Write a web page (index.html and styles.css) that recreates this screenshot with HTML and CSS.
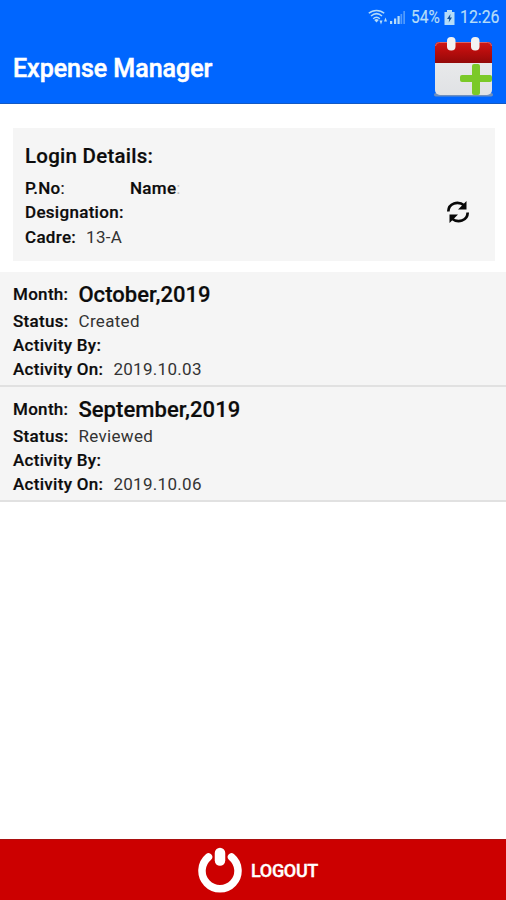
FILE: index.html
```html
<!DOCTYPE html>
<html lang="en">
<head>
<meta charset="utf-8">
<title>Expense Manager</title>
<link rel="stylesheet" href="styles.css">
</head>
<body>
<div class="screen">
  <header class="top">
    <div class="statusbar">
      <svg class="wifi" width="20" height="16" viewBox="0 0 20 16" fill="none" stroke="currentColor" stroke-width="1.5">
        <path d="M.8 4.300C5 .4 12 .4 16.200 4.300M3 7C6.500 4 10.500 4 14 7M5.200 9.700Q8.500 6.700 11.800 9.700"/>
        <path d="M6.200 11Q8.500 9 10.800 11L8.500 13.500zM11.500 11.500h3L13 15.500zM16 12.500l1.500-4 1.500 4z" fill="currentColor" stroke="none"/>
      </svg>
      <svg class="signal" width="16" height="13" viewBox="0 0 16 13" fill="currentColor">
        <path d="M0 10h2.200v3H0zM4 7.500h2.200V13H4zM7.500 5h2.200v8H7.500z"/><path opacity=".45" d="M10.500 3h1.700v10h-1.700zM13.300 0H15v13h-1.700z"/>
      </svg>
      <span class="percent">54%</span>
      <svg class="battery" width="11" height="15" viewBox="0 0 11 15">
        <path d="M3 0h5v2h2.500v13H.5V2H3z" fill="currentColor"/><path d="M6.500 4L3 9h2.200L4.700 12.500 8 7.500H6z" fill="#12529c"/>
      </svg>
      <span class="clock">12:26</span>
    </div>
    <div class="appbar">
      <h1>Expense Manager</h1>
      <svg class="calendar" width="62" height="62" viewBox="0 0 62 62">
        <defs>
          <linearGradient id="red" x2="0" y2="1"><stop stop-color="#ce1818"/><stop offset=".45" stop-color="#b80d0d"/><stop offset="1" stop-color="#930909"/></linearGradient>
          <linearGradient id="paper" x2="0" y2="1"><stop stop-color="#ededed"/><stop offset="1" stop-color="#e0e2e5"/></linearGradient>
        </defs>
        <rect x="1" y="56" width="59" height="3.500" rx="1.700" fill="#6f8fbd"/>
        <rect x="2" y="6" width="57" height="52" rx="5" fill="url(#paper)"/>
        <path d="M2 26V9q0-4 4-4h49q4 0 4 4v17z" fill="url(#red)"/>
        <path d="M2.500 9q0-3.500 4-3.500h48q4 0 4 3.500" fill="none" stroke="#dc6464"/>
        <rect x="14" y="0" width="8.500" height="13.500" rx="4" fill="#f2f2f2"/>
        <rect x="38" y="0" width="8.500" height="13.500" rx="4" fill="#f2f2f2"/>
        <path d="M39 29q0-2 2-2h4q2 0 2 2v9h10q2 0 2 2v3q0 2-2 2H47v11q0 2-2 2h-4q-2 0-2-2V45H29q-2 0-2-2v-3q0-2 2-2h10z" fill="#7bc928"/>
      </svg>
    </div>
  </header>
  <section class="card">
    <div class="details">
      <h2>Login Details:</h2>
      <div class="line"><b class="pno">P.No<i>:</i></b><b class="name">Name<i class="faint">:</i></b></div>
      <div class="line"><b class="designation">Designation:</b></div>
      <div class="line"><b class="cadre">Cadre:</b><span class="grade">13-A</span></div>
    </div>
    <svg class="refresh" width="24" height="24" viewBox="0 0 24 24">
      <path d="M2.300 11.500C2.500 3 12 .500 18.500 5.500M21.700 12.500C21.500 21 12 23.500 5.500 18.500" fill="none" stroke="#080808" stroke-width="2.700"/>
      <path d="M20.500 1V9.500h-8.500zM3.500 23V14.500h8.500z" fill="#080808"/>
    </svg>
  </section>
  <main class="list">
    <article class="entry">
      <div class="line month"><b>Month:</b><strong class="october">October,2019</strong></div>
      <div class="line"><b>Status:</b><span>Created</span></div>
      <div class="line"><b>Activity By:</b></div>
      <div class="line"><b>Activity On:</b><span>2019.10.03</span></div>
    </article>
    <article class="entry">
      <div class="line month"><b>Month:</b><strong>September,2019</strong></div>
      <div class="line"><b>Status:</b><span>Reviewed</span></div>
      <div class="line"><b>Activity By:</b></div>
      <div class="line"><b>Activity On:</b><span>2019.10.06</span></div>
    </article>
  </main>
  <footer class="logout">
    <svg width="44" height="46" viewBox="0 0 44 46" fill="none" stroke="#fff" stroke-linecap="round">
      <path d="M10.500 10A18 18 0 1 0 33.500 10" stroke-width="7.500"/><path d="M22 6v7.500" stroke-width="10.500"/>
    </svg>
    <span>LOGOUT</span>
  </footer>
</div>
</body>
</html>
```

FILE: styles.css
```css
* { box-sizing: border-box; }
body { margin: 0; background: #fff; font-family: Roboto, "Liberation Sans", sans-serif; color: #0c0c0c; }
.screen { height: 900px; display: flex; flex-direction: column; }
svg { display: block; flex: none; }
.top { height: 104px; background: #0066ff; border-bottom: 1px solid #1259c4; }
.statusbar { height: 34px; padding: 0 6px 0 0; display: flex; align-items: center; justify-content: flex-end; color: #b5dcf8; font-size: 18px; line-height: 34px; -webkit-text-stroke: .2px; }
.wifi { margin-right: 2px; }
.signal { margin-right: 5px; }
.percent { width: 29px; transform: scaleX(.86); transform-origin: left; }
.battery { margin: 0 5px 0 4px; }
.clock { width: 40px; transform: scaleX(.88); transform-origin: left; }
.appbar { height: 69px; padding: 3px 11px 0 13px; display: flex; justify-content: space-between; align-items: flex-start; }
h1 { margin: 18px 0 0; font-size: 25px; line-height: 28px; font-weight: 500; color: #fff; letter-spacing: -.02px; white-space: nowrap; -webkit-text-stroke: .5px; }
.card { height: 133px; margin: 24px 11px 11px 13px; padding: 14px 25px 0 12px; background: #f5f5f5; display: flex; justify-content: space-between; }
h2 { margin: 0 0 6px; font-size: 20.500px; line-height: 28px; font-weight: 500; letter-spacing: .25px; -webkit-text-stroke: .2px; }
.line { height: 24.3px; line-height: 24.3px; display: flex; gap: 10px; font-size: 17px; letter-spacing: .3px; white-space: nowrap; }
.line b { font-weight: 500; -webkit-text-stroke: .2px; }
.line i { font-style: normal; font-weight: 400; }
.line .faint { color: #bbb; -webkit-text-stroke: 0; }
.line span { color: #333; font-weight: 400; }
.pno { width: 95px; }
.refresh { margin-top: 58px; }
.list { flex: 1; }
.entry { height: 115px; padding-top: 9px; background: #f5f5f5; border-bottom: 2px solid #e1e1e1; padding-left: 13px; }
.entry .month { height: 27.5px; line-height: 27.5px; }
.entry .month b { line-height: 26px; }
.entry .line:not(.month) { height: 24px; line-height: 24px; }
.entry strong { font-size: 22px; font-weight: 500; letter-spacing: .06px; -webkit-text-stroke: .2px; }
.logout { height: 61px; background: #cc0000; border-top: 1px solid #aa1010; display: flex; align-items: center; justify-content: center; gap: 9px; color: #fff; font-size: 18px; font-weight: 500; padding-left: 10px; }
.logout span { letter-spacing: -.35px; -webkit-text-stroke: .4px; }
```
